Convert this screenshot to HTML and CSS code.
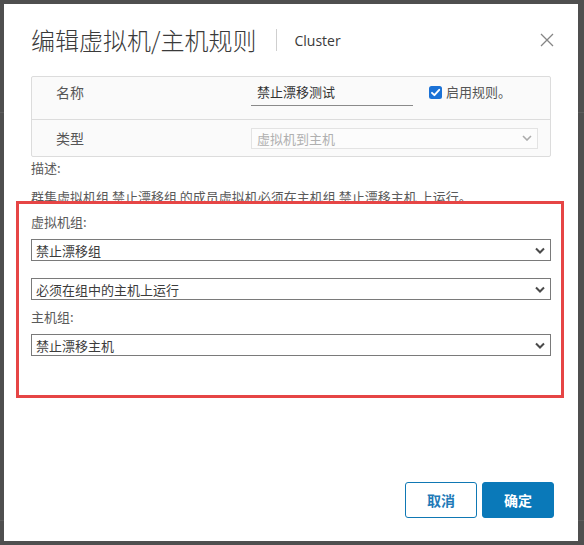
FILE: index.html
```html
<!DOCTYPE html>
<html lang="zh-CN">
<head>
<meta charset="utf-8">
<title>编辑虚拟机/主机规则</title>
<link rel="stylesheet" href="styles.css">
</head>
<body>
<div class="backdrop-line line-a"></div>
<div class="backdrop-line line-b"></div>
<div class="dialog">
  <div class="header">
    <h1 class="title">编辑虚拟机/主机规则</h1>
    <span class="divider"></span>
    <span class="subtitle">Cluster</span>
    <span class="close">
      <svg width="14" height="14" viewBox="0 0 14 14"><path d="M1 1 L13 13 M13 1 L1 13" stroke="#858585" stroke-width="1.3" fill="none"/></svg>
    </span>
  </div>

  <div class="form-table">
    <div class="row row-name">
      <div class="label">名称</div>
      <div class="name-input">禁止漂移测试</div>
      <span class="checkbox"><svg width="13" height="13" viewBox="0 0 13 13"><rect x="0" y="0" width="13" height="13" rx="2.5" fill="#1b72d6"/><path d="M3 6.8 L5.4 9.2 L10.2 3.8" stroke="#fff" stroke-width="1.9" fill="none" stroke-linecap="round" stroke-linejoin="round"/></svg></span>
      <span class="check-label">启用规则。</span>
    </div>
    <div class="row row-type">
      <div class="label">类型</div>
      <div class="type-select">
        <span>虚拟机到主机</span>
        <svg width="10" height="6" viewBox="0 0 10 6"><path d="M1 1 L5 5 L9 1" stroke="#ababab" stroke-width="1.6" fill="none"/></svg>
      </div>
    </div>
  </div>

  <div class="desc-label">描述:</div>
  <div class="desc">群集虚拟机组 禁止漂移组 的成员虚拟机必须在主机组 禁止漂移主机 上运行。</div>

  <div class="field-label vm-label">虚拟机组:</div>
  <div class="select sel-first">
    <span>禁止漂移组</span>
    <svg width="10" height="7" viewBox="0 0 10 7"><path d="M1 1.5 L5 5.5 L9 1.5" stroke="#4a4a4a" stroke-width="2" fill="none"/></svg>
  </div>
  <div class="select sel-second">
    <span>必须在组中的主机上运行</span>
    <svg width="10" height="7" viewBox="0 0 10 7"><path d="M1 1.5 L5 5.5 L9 1.5" stroke="#4a4a4a" stroke-width="2" fill="none"/></svg>
  </div>
  <div class="field-label host-label">主机组:</div>
  <div class="select sel-third">
    <span>禁止漂移主机</span>
    <svg width="10" height="7" viewBox="0 0 10 7"><path d="M1 1.5 L5 5.5 L9 1.5" stroke="#4a4a4a" stroke-width="2" fill="none"/></svg>
  </div>

  <div class="footer">
    <button class="btn btn-outline">取消</button>
    <button class="btn btn-primary">确定</button>
  </div>

  <div class="highlight"></div>
</div>
</body>
</html>
```

FILE: styles.css
```css
* { box-sizing: border-box; }

html, body {
  margin: 0;
  padding: 0;
}

body {
  width: 584px;
  height: 545px;
  background: #4f4f4f;
  padding: 4px 6px 4px 4px;
  font-family: "Open Sans", "Noto Sans CJK SC", sans-serif;
  color: #565656;
  position: relative;
  overflow: hidden;
}

.backdrop-line {
  position: absolute;
  left: 0;
  right: 0;
  height: 1px;
  background: #5c5c5c;
}
.line-a { top: 112px; }
.line-b { top: 520px; }

.dialog {
  position: relative;
  width: 574px;
  height: 537px;
  background: #ffffff;
  padding: 20px 27px 23px 27px;
  display: flex;
  flex-direction: column;
}

.header {
  display: flex;
  align-items: center;
  height: 32px;
}

.title {
  margin: 0;
  font-size: 24px;
  font-weight: 300;
  line-height: 32px;
  color: #3a3a3a;
  letter-spacing: 0;
  font-family: "Noto Sans CJK SC", sans-serif;
}

.divider {
  width: 1px;
  height: 22px;
  background: #cfcfcf;
  margin-left: 20px;
  margin-right: 17px;
}

.subtitle {
  font-size: 14px;
  color: #3a3a3a;
}

.close {
  margin-left: auto;
  margin-right: -3px;
  margin-top: -1px;
  width: 14px;
  height: 14px;
  display: flex;
}

.form-table {
  margin-top: 20px;
  border: 1px solid #dcdcdc;
  border-radius: 2px;
  background: #fafafa;
}

.row {
  display: flex;
  padding-left: 24px;
  padding-right: 12px;
}

.row-name {
  height: 43px;
  align-items: flex-start;
  padding-top: 5px;
  border-bottom: 1px solid #dcdcdc;
}

.row-type {
  height: 36px;
  align-items: center;
}

.label {
  width: 195px;
  font-size: 14px;
  line-height: 20px;
  color: #565656;
  font-family: "Noto Sans CJK SC", sans-serif;
}

.name-input {
  width: 162px;
  height: 24px;
  border-bottom: 1px solid #8a8a8a;
  font-size: 13px;
  line-height: 20px;
  padding-left: 6px;
  color: #333;
  font-family: "Noto Sans CJK SC", sans-serif;
}

.checkbox {
  margin-left: 16px;
  margin-top: 4px;
  width: 13px;
  height: 13px;
  display: flex;
}

.check-label {
  margin-left: 4px;
  font-size: 13px;
  line-height: 20px;
  color: #565656;
  font-family: "Noto Sans CJK SC", sans-serif;
}

.type-select {
  flex: 1;
  height: 21px;
  border: 1px solid #e3e3e3;
  background: #fcfcfc;
  display: flex;
  align-items: center;
  justify-content: space-between;
  padding: 0 5px 0 5px;
  font-size: 13px;
  color: #b0b0b0;
  font-family: "Noto Sans CJK SC", sans-serif;
}

.desc-label {
  margin-top: 1px;
  font-size: 13px;
  line-height: 20px;
  color: #5a5a5a;
  font-family: "Noto Sans CJK SC", sans-serif;
}

.desc {
  margin-top: 9px;
  font-size: 13px;
  line-height: 20px;
  color: #5a5a5a;
  white-space: nowrap;
  font-family: "Noto Sans CJK SC", sans-serif;
}

.field-label {
  font-size: 13px;
  line-height: 20px;
  color: #5a5a5a;
  font-family: "Noto Sans CJK SC", sans-serif;
}

.vm-label { margin-top: 5px; }
.host-label { margin-top: 7px; }

.select {
  height: 22px;
  border: 1px solid #7a7a7a;
  background: #fff;
  display: flex;
  align-items: center;
  justify-content: space-between;
  padding: 0 5px 0 4px;
  font-size: 13px;
  color: #3c3c3c;
  font-family: "Noto Sans CJK SC", sans-serif;
}

.sel-first { margin-top: 7px; }
.sel-second { margin-top: 17px; }
.sel-third { margin-top: 7px; }

.footer {
  margin-top: auto;
  margin-right: -3px;
  display: flex;
  justify-content: flex-end;
  gap: 5px;
}

.btn {
  width: 72px;
  height: 36px;
  border-radius: 3px;
  font-size: 14px;
  font-weight: 600;
  font-family: "Noto Sans CJK SC", sans-serif;
  padding: 0;
  cursor: pointer;
}

.btn-outline {
  background: #fff;
  border: 1px solid #0f78b4;
  color: #1f7ab8;
}

.btn-primary {
  background: #0a79b9;
  border: 1px solid #0a79b9;
  color: #fff;
}

.highlight {
  position: absolute;
  left: 12px;
  top: 197px;
  width: 548px;
  height: 197px;
  border: 3px solid #e64545;
  pointer-events: none;
}
```
